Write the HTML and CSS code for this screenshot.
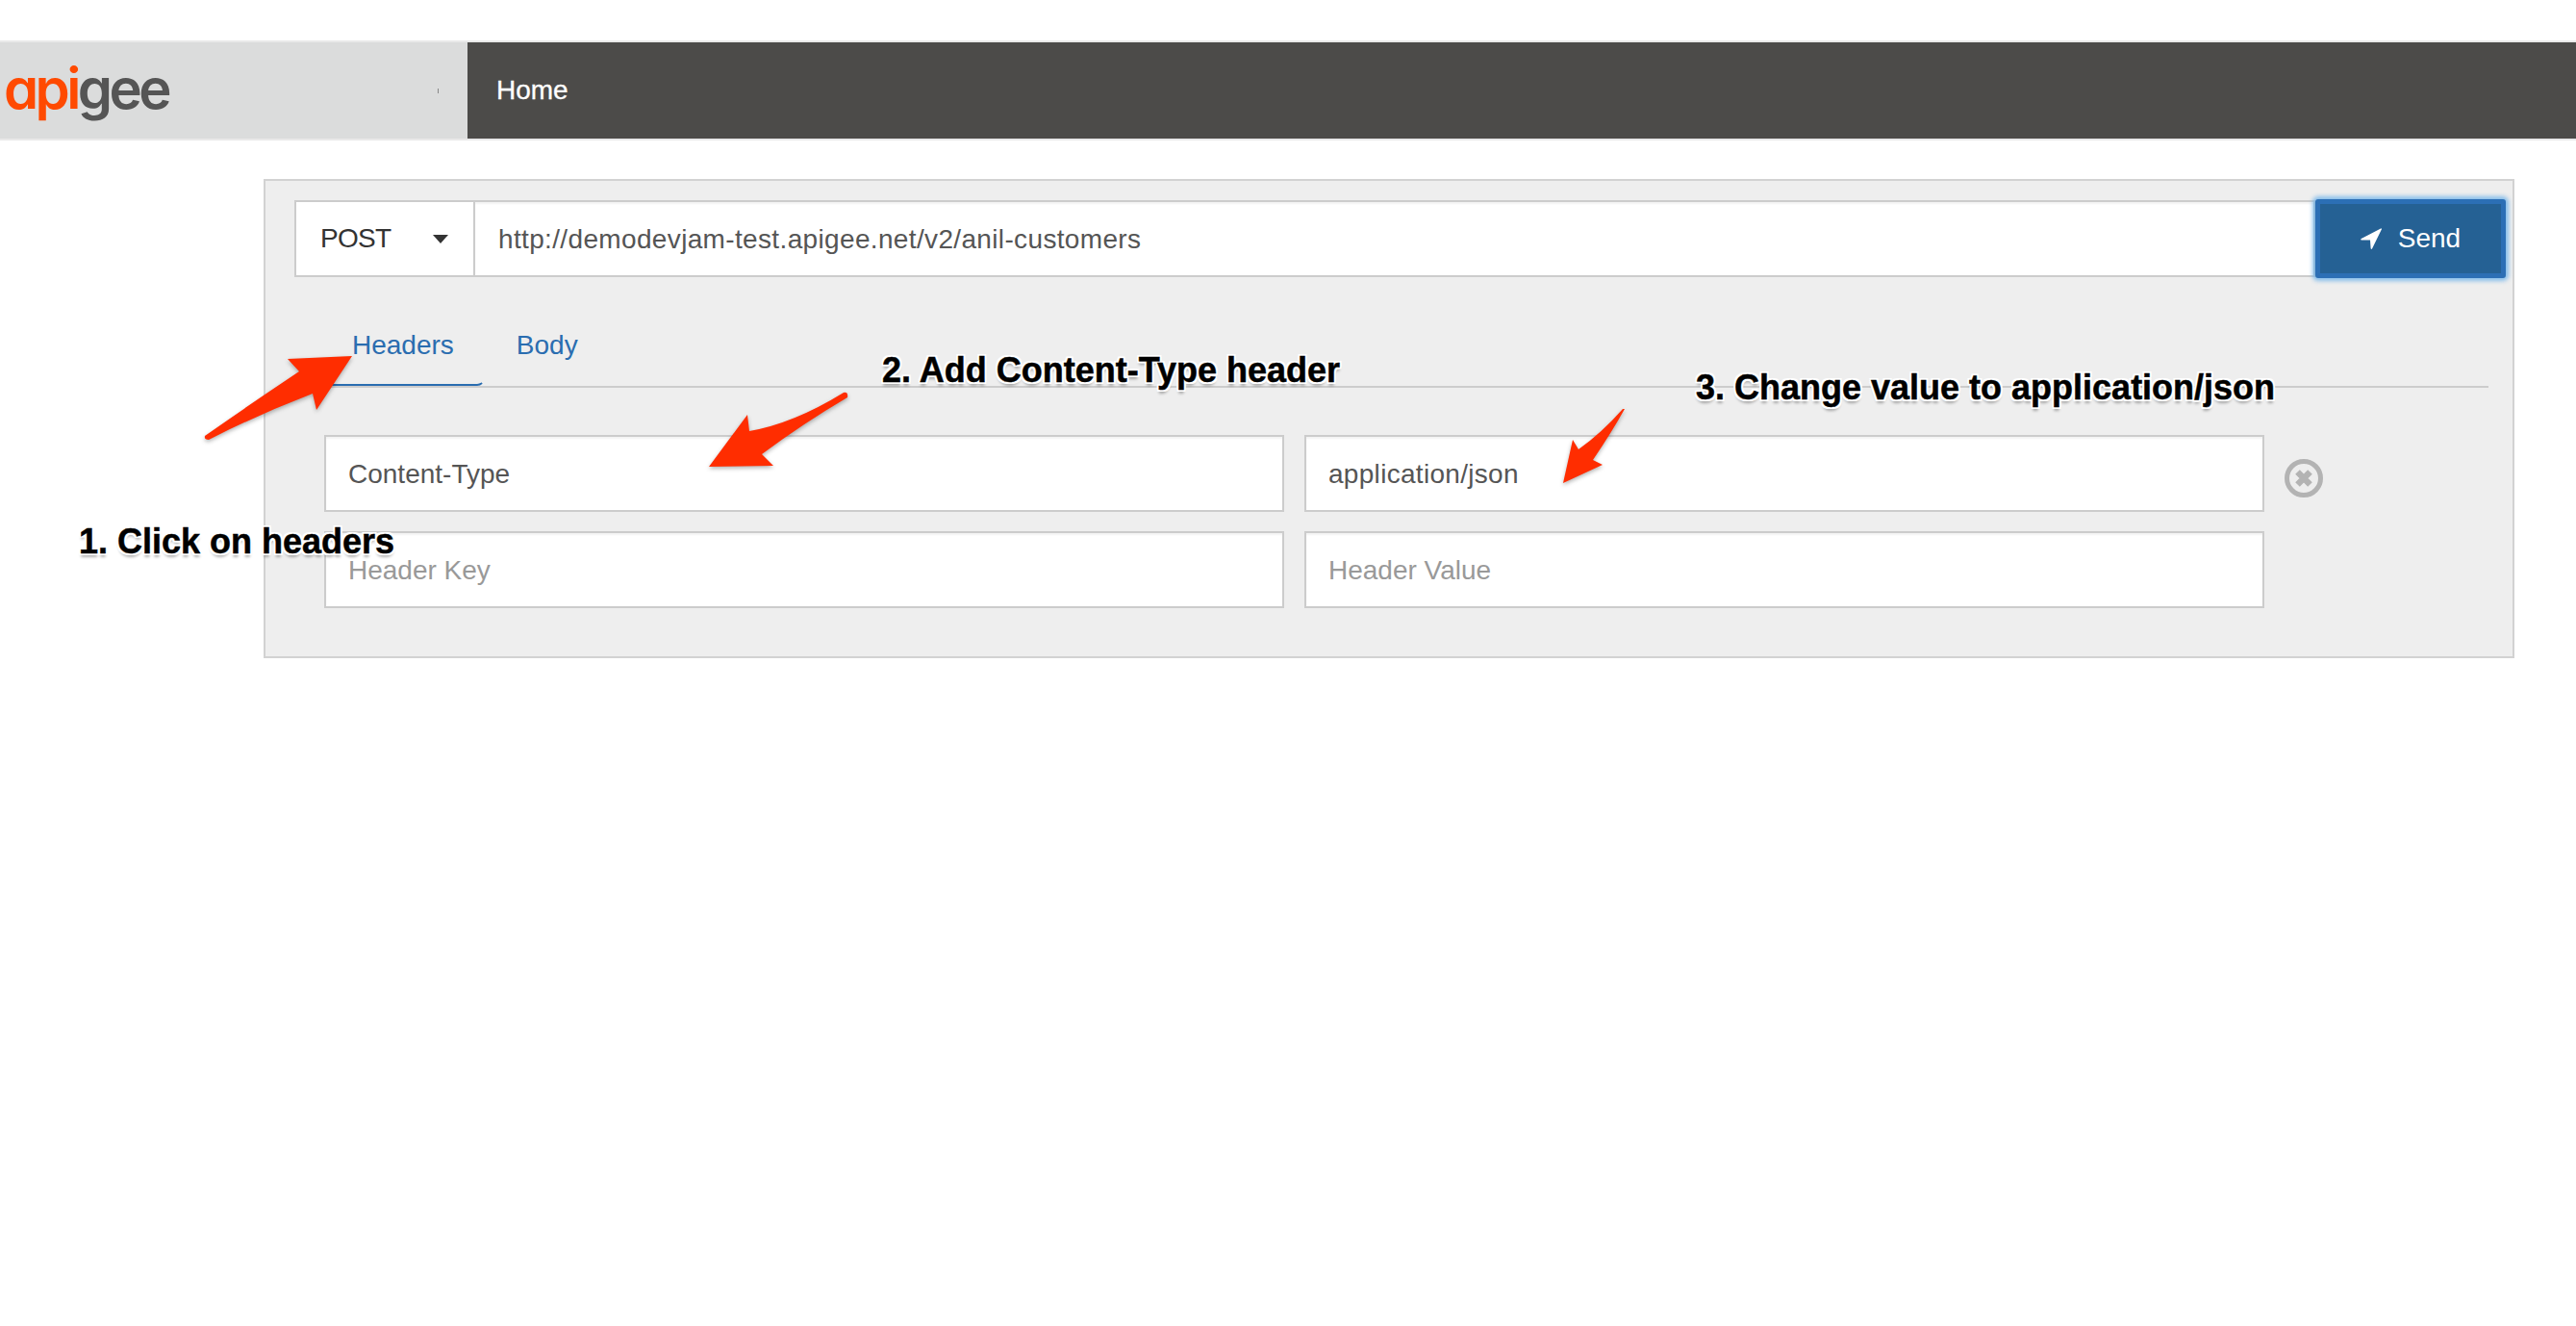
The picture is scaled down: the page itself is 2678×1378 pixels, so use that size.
FILE: index.html
```html
<!DOCTYPE html>
<html lang="en">
<head>
    <meta charset="UTF-8">
    <title>Apigee API Console</title>
    <link rel="stylesheet" href="styles.css">
</head>
<body>

    <nav class="navbar">
        <div class="brand">
            <span class="logo"><span class="logo-api">api</span><span class="logo-gee">gee</span></span>
            <span class="brand-mark"></span>
        </div>
        <a class="nav-link">Home</a>
    </nav>

    <div class="panel">
        <div class="request-row">
            <div class="method">
                <span class="method-name">POST</span>
                <span class="caret"></span>
            </div>
            <div class="url">http://demodevjam-test.apigee.net/v2/anil-customers</div>
            <button class="send-btn">
                <svg class="send-icon" viewBox="0 0 22 22"><path d="M21 0.5 Q22.5 0 21.8 1.5 L12 21.5 Q11 22.5 10.6 21 L10 12.5 L1 12.5 Q-0.5 12 0.8 11 Z"/></svg>
                Send
            </button>
        </div>

        <div class="tabs">
            <a class="tab active">Headers</a>
            <a class="tab">Body</a>
        </div>

        <div class="header-rows">
            <div class="header-row">
                <div class="field">Content-Type</div>
                <div class="field field-value">application/json</div>
                <svg class="remove-icon" viewBox="0 0 40 40">
                    <circle cx="20" cy="20" r="17.5" fill="none" stroke="#b3b3b3" stroke-width="5"/>
                    <path d="M13.5 13.5 L26.5 26.5 M26.5 13.5 L13.5 26.5" stroke="#b3b3b3" stroke-width="6.5"/>
                </svg>
            </div>
            <div class="header-row">
                <div class="field placeholder">Header Key</div>
                <div class="field placeholder">Header Value</div>
            </div>
        </div>
    </div>

    <!-- screenshot annotations -->
    <svg class="arrows" viewBox="0 0 2678 1378">
        <path d="M366 370 L299 373 L311 386 Q260 420 213 453 Q212 457 217 457 Q270 430 325 409 L329 426 Z"/>
        <path d="M737 485 L804 484 L792 472 Q835 440 881 413 Q882 407 877 408 Q825 440 779 448 L777 431 Z"/>
        <path d="M1625 502 L1666 483 L1656 478 Q1675 450 1689 425 L1687 425 Q1665 450 1641 467 L1635 457 Z"/>
    </svg>
    <div class="note note-1">1. Click on headers</div>
    <div class="note note-2">2. Add Content-Type header</div>
    <div class="note note-3">3. Change value to application/json</div>

</body>
</html>
```

FILE: styles.css
```css
body {
    font-family: "Liberation Sans", Arial, sans-serif;
    font-size: 28px;
    line-height: 40px;
    color: #555;
    margin: 0;
    padding: 42px 0 0;
    background-color: #fff;
}
.navbar {
    display: flex;
    height: 100px;
    background-color: #4c4b49;
    border-top: 2px solid #e9e9e9;
    border-bottom: 2px solid #e9e9e9;
}
.brand {
    display: flex;
    align-items: center;
    width: 486px;
    padding-left: 4px;
    box-sizing: border-box;
    background-color: #dbdcdc;
}
.logo {
    font-family: Inter, sans-serif;
    font-feature-settings: "cv11";
    font-size: 58px;
    font-weight: 600;
    letter-spacing: -3.6px;
    line-height: 1;
    margin-top: -4px;
}
.logo-api {
    color: #ff4a00;
}
.logo-gee {
    color: #555;
}
.brand-mark {
    width: 1px;
    height: 5px;
    margin-left: auto;
    margin-right: 30px;
    background-color: #888;
}
.nav-link {
    padding: 30px;
    color: #fff;
    -webkit-text-stroke: 0.3px #fff;
}
.panel {
    margin: 40px 64px 0 274px;
    padding: 20px 7px 50px 30px;
    background-color: #eee;
    border: 2px solid #d2d2d2;
}
.request-row {
    display: flex;
    height: 80px;
}
.method {
    display: flex;
    align-items: center;
    justify-content: space-between;
    width: 188px;
    padding: 0 26px 0 25px;
    box-sizing: border-box;
    color: #333;
    background-color: #fff;
    border: 2px solid #ccc;
}
.method-name {
    letter-spacing: -0.7px;
}
.caret {
    border-top: 9px solid #333;
    border-left: 8px solid transparent;
    border-right: 8px solid transparent;
}
.url {
    flex: 1;
    padding: 19px 24px 17px;
    box-sizing: border-box;
    letter-spacing: 0.35px;
    background-color: #fff;
    border: 2px solid #ccc;
    border-left-width: 0;
    box-shadow: inset 0 2px 2px rgba(0, 0, 0, 0.05);
}
.send-btn {
    display: flex;
    align-items: center;
    justify-content: center;
    gap: 17px;
    width: 198px;
    margin: -1px 0;
    font: inherit;
    color: #fff;
    background-color: #256194;
    border: 5px solid #2c6fb5;
    border-radius: 3px;
    box-shadow: 0 0 4px 3px rgba(102, 175, 233, 0.75);
}
.send-icon {
    width: 22px;
    height: 22px;
    fill: #fff;
}
.tabs {
    display: flex;
    margin: 27px 18px 0 27px;
    border-bottom: 2px solid #ccc;
}
.tab {
    padding: 24px 30px 20px 33px;
    color: #2a6db0;
    border-bottom: 2px solid transparent;
    border-right: 2px solid transparent;
}
.tab.active {
    border-bottom-color: #2a6db0;
    border-bottom-right-radius: 8px;
}
.header-rows {
    display: flex;
    flex-direction: column;
    gap: 20px;
    margin: 49px 0 0 31px;
}
.header-row {
    display: flex;
    align-items: center;
    gap: 21px;
}
.field {
    width: 998px;
    height: 80px;
    padding: 19px 23px 17px;
    box-sizing: border-box;
    background-color: #fff;
    border: 2px solid #ccc;
    box-shadow: inset 0 2px 2px rgba(0, 0, 0, 0.05);
}
.field-value {
    letter-spacing: 0.3px;
}
.placeholder {
    color: #999;
}
.remove-icon {
    width: 40px;
    height: 40px;
    margin-top: 10px;
}
.arrows {
    position: absolute;
    top: 0;
    left: 0;
    width: 2678px;
    height: 1378px;
    fill: #ff2d00;
    filter: drop-shadow(0 2px 2px rgba(0, 0, 0, 0.3));
}
.note {
    position: absolute;
    font-size: 36px;
    font-weight: 700;
    color: #000;
    white-space: nowrap;
    -webkit-text-stroke: 0.5px #000;
    text-shadow: 2px 0 0 #fff, -2px 0 0 #fff, 0 2px 0 #fff, 0 -2px 0 #fff,
        2px 2px 0 #fff, -2px 2px 0 #fff, 2px -2px 0 #fff, -2px -2px 0 #fff,
        0 4px 3px rgba(0, 0, 0, 0.3);
}
.note-1 {
    top: 543px;
    left: 82px;
}
.note-2 {
    top: 365px;
    left: 917px;
}
.note-3 {
    top: 383px;
    left: 1763px;
}
```
